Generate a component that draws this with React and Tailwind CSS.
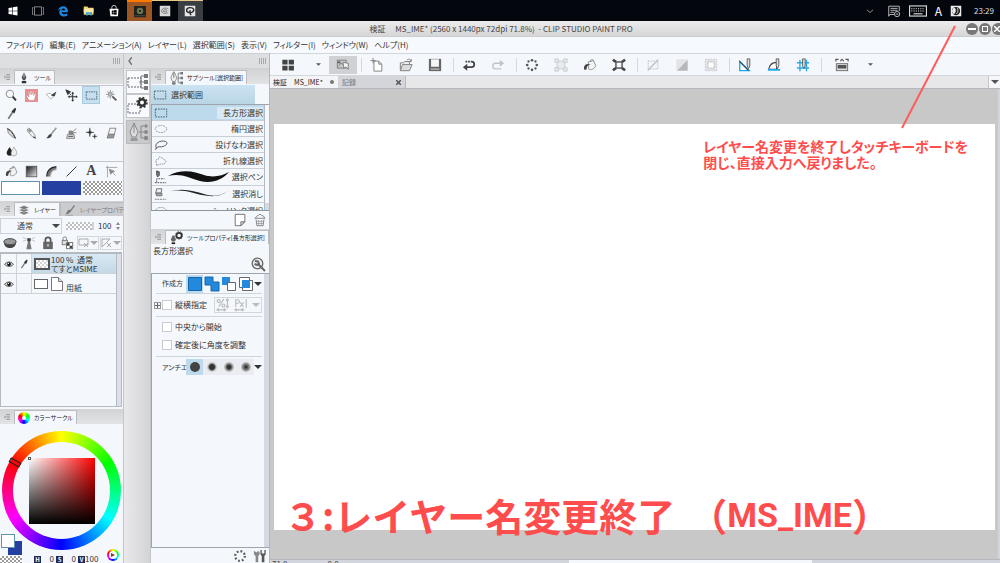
import React, { useState } from "react";
import clsx from "clsx";

const dash = { strokeDasharray: "2 1", fill: "none" };

// All glyphs share a 16x16 box.
const ICONS = {
  windows: (
    <path fill="#fff" d="M2 4l5-.8v4.4H2zM7.8 3L14 2v5.6H7.8zM2 8.4h5v4.4L2 12zM7.8 8.4H14V14l-6.2-1z" />
  ),
  taskview: (
    <g stroke="#aaa" fill="none">
      <rect x="3.500" y="2.500" width="9" height="11" />
      <path d="M2 3.500H.5v9H2M14 3.500h1.500v9H14" />
    </g>
  ),
  edge: (
    <path
      fill="#1b86e0"
      d="M1.500 7.500C2 3.500 5 1.500 8.300 1.500c4 0 6.200 2.800 6.200 6.500v1.500H6c.2 2 2 2.800 4 2.800 1.500 0 2.600-.4 3.700-1v3c-1.200.7-2.700 1-4.400 1C5.200 15.300 3 13 3 10c0-2 1-3.800 2.800-4.800C4 5.500 2.500 6.300 1.500 7.500zM6.200 7h4.600c0-1.500-.8-2.400-2.200-2.400S6.400 5.500 6.200 7z"
    />
  ),
  folder: (
    <g>
      <path fill="#f5d36b" d="M1 2h5l1 1.500h7V13H1z" />
      <path fill="#fbe9a8" d="M1 5h13v5H1z" />
      <path fill="#2fa8e0" d="M4 14V9.500h8V14h-2.500v-2.500h-3V14z" />
    </g>
  ),
  store: (
    <g>
      <path d="M5 5V3.500a3 3 0 0 1 6 0V5" stroke="#fff" fill="none" />
      <path fill="#fff" d="M2 5h12l-.7 10H3.200z" />
      <path fill="#000" d="M5 7.500l2.600-.4v2.500H5zM8 7l3.500-.5v3.100H8zM5 10h2.600v2.500L5 12.200zM8 10h3.500v3L8 12.600z" />
    </g>
  ),
  recorder: (
    <g>
      <rect width="16" height="15" fill="#20221f" />
      <circle cx="8" cy="6.500" r="4.300" fill="#62705a" />
      <circle cx="8" cy="6.500" r="2.300" fill="#1d211b" stroke="#9a9a50" />
      <path d="M1 13h14" stroke="#555" />
    </g>
  ),
  clip: (
    <g>
      <rect x="1" y="1" width="14" height="14" fill="#d9d9d9" />
      <path d="M12.500 5.500C10 3 3.500 4 3.500 8s7 4 9 1.500M11 7c-2-1.500-5-.5-5 1s3 1.500 4.500.5" stroke="#777" fill="none" strokeWidth="1.300" />
    </g>
  ),
  clipDark: (
    <g>
      <rect x="1" y="1" width="14" height="14" fill="#e6e6e6" />
      <path d="M6.500 10C2 9 2.500 3.500 8 3.500s6.500 4 3 6c-2 1-4.500-.5-2.500-2.500M7 9.500l2.500 4" stroke="#222" fill="none" strokeWidth="1.800" />
    </g>
  ),
  chevron: <path d="M3 6l5 4.500L13 6" stroke="#bbb" fill="none" strokeWidth="1.200" />,
  notify: (
    <g stroke="#ccc" fill="none">
      <path d="M8 12H3l-1 2V2.500h12V8M4 5h8M4 7.200h8M4 9.500h4" />
      <circle cx="11.500" cy="11.500" r="3" />
      <path d="M10 11.500h3" />
    </g>
  ),
  keyboard: (
    <g stroke="#ddd" fill="none">
      <rect x=".5" y="3.500" width="15" height="9" />
      <path d="M2 6h12M2 8h12" strokeDasharray="1 1" />
      <path d="M4 10.500h8" />
    </g>
  ),
  ime: (
    <g>
      <rect x="1" y="1" width="14" height="14" fill="#eee" />
      <circle cx="8" cy="8" r="5.500" fill="#222" />
      <path d="M5.500 3.500C8.500 4 8.500 10 5 12 1.500 9 2.500 5 5.500 3.500z" fill="#eee" />
      <path d="M10 4c1 3 1 5-1.500 8" stroke="#eee" fill="none" />
    </g>
  ),
  pen: (
    <g>
      <path d="M7.500 1L5 7l1.500 4h3L11 7 8.500 1z" fill="#555" />
      <path d="M8 2v5" stroke="#eee" />
      <path d="M5 12h6v3H5z" fill="#333" />
    </g>
  ),
  zoom: (
    <g>
      <circle cx="6" cy="6" r="4.500" fill="#f8f8f8" stroke="#999" strokeWidth="1.300" />
      <path d="M9.500 9.500l4 4.500" stroke="#333" strokeWidth="2.400" />
    </g>
  ),
  hand: (
    <g>
      <rect x="0" y="0" width="16" height="16" fill="#e98f8f" />
      <path
        d="M5 14L2 9.200c-.8-1.400.7-1.800 1.500-.8L5 9.800 4 4c0-1.200 1.400-1.200 1.600 0l.8 3V2.600c0-1.200 1.600-1.200 1.700 0L8.400 7l1-3.800c.3-1.100 1.700-.8 1.500.4L10.500 8l1.600-2.400c.8-.9 1.800-.2 1.300.8L11.500 14z"
        fill="#fff"
        stroke="#a66"
        strokeWidth=".5"
      />
    </g>
  ),
  operate: (
    <g>
      <path d="M1.500 6.500L6 5l5 4-4 3.500z" fill="#fbfbfb" stroke="#aaa" />
      <path d="M8 7l6-4-2 6-4-.5z" fill="#444" />
    </g>
  ),
  move: (
    <g stroke="#333" fill="#333">
      <path d="M1 1l6 2.500L4.500 4.500 3.500 7z" />
      <path d="M4 4l4 4" />
      <path d="M9.500 5v9M5 9.500h9" fill="none" strokeWidth="1.300" />
      <path d="M9.500 3.500l1.500 2H8zM9.500 15.500l1.500-2H8zM3.500 9.500l2-1.500v3zM15.500 9.500l-2-1.500v3z" strokeWidth=".3" />
    </g>
  ),
  marquee: <rect x="1.500" y="3.500" width="13" height="9" stroke="#456" {...dash} />,
  wand: (
    <g stroke="#888">
      <path d="M6.500 1v3M6.500 9v3M1 6.500h3M9 6.500h3M2.500 2.500l2 2M10.500 2.500l-2 2M2.500 10.500l2-2" />
      <circle cx="6.500" cy="6.500" r="2.500" fill="#bbb" />
      <path d="M9 9l5 5" stroke="#555" strokeWidth="2" />
    </g>
  ),
  eyedropper: (
    <g>
      <path d="M4 14.500l6-9" stroke="#777" strokeWidth="2" />
      <path d="M8 5.500l3.500 2.500L13.500 3c.5-2-1.500-2.500-2.500-1z" fill="#333" />
    </g>
  ),
  nib: (
    <g>
      <path d="M3 1.500l5 3.500 3.500 5 1.500 4-4-2-5-4.500z" fill="#ddd" stroke="#777" />
      <path d="M3 2l5 4 5 8" stroke="#222" fill="none" />
    </g>
  ),
  pencil: (
    <g>
      <path d="M3 2.500c1-1.500 3-1 3.500 0L12 9.500l1 4.500-4-2-6-7z" fill="#eee" stroke="#888" />
      <path d="M3 3l4-1 2 3-3.500 2z" fill="#999" />
      <path d="M11 11.500l2.500 3-3.500-2z" fill="#222" />
    </g>
  ),
  brush: (
    <g>
      <path d="M14 1L7 9.500" stroke="#999" strokeWidth="2" />
      <path d="M8.500 9.500C8 13 5 14.500 1.500 13.500 3.500 12.500 4 9 6.500 8.500z" fill="#444" />
    </g>
  ),
  airbrush: (
    <g stroke="#777" fill="#ddd">
      <path d="M3 9h8l1 5H2z" />
      <path d="M5 8.500V5h4l1 3.500z" fill="#888" />
      <path d="M9 6l5-4M10 7h4" fill="none" />
      <path d="M4 11.500h6" stroke="#333" />
    </g>
  ),
  sparkle: (
    <g fill="#222">
      <path d="M6 1l.8 4.700L11 6.500l-4.200.8L6 12l-.8-4.700L1 6.500l4.200-.8zM12 8.500l.5 2.500 2.500.5-2.500.5-.5 2.500-.5-2.500L9 11.500l2.500-.5z" stroke="#222" strokeWidth=".4" />
    </g>
  ),
  eraser: (
    <g stroke="#777">
      <path d="M6 1.500h7.500L11.500 9H4z" fill="#f4f4f4" />
      <path d="M4 9h7.500l-1 4.500H2.500z" fill="#999" />
    </g>
  ),
  blend: (
    <g>
      <path d="M5.500 2.500c2 3 4 5.500 4 7.500A3.800 3.800 0 0 1 2 10c0-2 2-4.500 3.500-7.500z" fill="#222" />
      <path d="M11 2.500c2 3 3.500 5.500 3.500 7.500a3.500 3.500 0 0 1-7 0c0-2 2-4.500 3.500-7.500z" fill="#eee" stroke="#888" strokeWidth=".7" />
    </g>
  ),
  bucket: (
    <g>
      <path d="M6 4.500l6-1.500 2.500 5.500c-1 4-6 6-8 4z" fill="#f3f3f3" stroke="#888" />
      <path d="M12 3c-1-2-3-1.500-4 1" stroke="#777" fill="none" />
      <path d="M1 12C1 7 5 6 9 7.500 5 8 4.500 10 4 13c-1 1-3 .5-3-1z" fill="#444" />
    </g>
  ),
  gradient: (
    <g>
      <linearGradient id="toolGradient" x1="0" y1="0" x2="1" y2="1">
        <stop offset="0" stopColor="#111" />
        <stop offset="1" stopColor="#eee" />
      </linearGradient>
      <rect x="1.500" y="1.500" width="13" height="13" fill="url(#toolGradient)" stroke="#555" />
    </g>
  ),
  contour: (
    <g>
      <path d="M2 14C2 7 6 3 14 2v4c-4 0-7 3-7 8z" fill="#777" />
      <path d="M2 14C2 7 6 3 14 2" stroke="#222" fill="none" strokeWidth="1.300" />
      <path d="M7 14c0-5 3-8 7-8" stroke="#ccc" fill="none" strokeWidth="1.500" />
    </g>
  ),
  line: <path d="M2 14L14 2" stroke="#333" strokeWidth="1.200" />,
  ruler: (
    <g stroke="#999" fill="none">
      <path d="M1 3h14M3 1v14" />
      <path d="M5 5l8 8M5 5l2 6.500 2-2.500 3-1z" fill="#777" />
    </g>
  ),
  layers: (
    <g fill="#777" stroke="#f4f4f4" strokeWidth=".7">
      <path d="M8 9l7 2.500-7 3-7-3z" />
      <path d="M8 5.500L15 8l-7 3-7-3z" />
      <path d="M8 2l7 2.500-7 3-7-3z" />
    </g>
  ),
  layerProp: (
    <g>
      <path d="M14 2l-6 8" stroke="#888" strokeWidth="2" />
      <path d="M9 8c0 4-4 6-7 5.500C4 12 4 8.500 6.500 7.500z" fill="#777" />
      <path d="M2 15h10" stroke="#999" />
    </g>
  ),
  mask: (
    <g>
      <ellipse cx="8" cy="6.500" rx="7" ry="3.500" fill="#999" stroke="#333" />
      <path d="M1 7c0 9 14 9 14 0-2 4-12 4-14 0z" fill="#444" />
    </g>
  ),
  beacon: (
    <g>
      <path d="M7 5h2l2 10H5z" fill="#777" />
      <path d="M6 2.500h4V6H6z" fill="#444" />
      <path d="M1 1.500l4 2M15 1.500l-4 2M1 6l4-1.500M15 6l-4-1.500" stroke="#bbb" />
    </g>
  ),
  lock: (
    <g>
      <path d="M5 7V4.500a3 3 0 0 1 6 0V7" stroke="#555" fill="none" strokeWidth="2" />
      <rect x="2.500" y="6.500" width="11" height="8.500" fill="#666" />
      <path d="M8 9v3" stroke="#ddd" strokeWidth="1.500" />
    </g>
  ),
  lockAlpha: (
    <g>
      <path d="M3.500 5V3a2 2 0 0 1 4 0v2" stroke="#777" fill="none" />
      <rect x="2.500" y="5" width="6" height="5" fill="#ddd" stroke="#777" />
      <rect x="7.500" y="7.500" width="7" height="7" fill="#fff" stroke="#666" />
      <path d="M8 8h3v3H8zM11 11h3v3h-3z" fill="#444" />
    </g>
  ),
  eye: (
    <g>
      <path d="M1 8.500c3-5 11-5 14 0-3 4.500-11 4.500-14 0z" fill="#ccc" stroke="#333" strokeWidth="1.200" />
      <circle cx="8" cy="8" r="3" fill="#111" />
      <circle cx="7" cy="7" r="1" fill="#fff" />
    </g>
  ),
  trash: (
    <g stroke="#777" fill="none">
      <path d="M2 6h12M3 6c0-2 2-3 3-3 1-2 3-2 4 0 2 0 3 1 3 3M3.500 7.500l1 7h7l1-7" />
      <path d="M6.500 8v6M9.500 8v6M4 9.500h8M4.500 12h7" strokeWidth=".6" />
    </g>
  ),
  note: (
    <g stroke="#666">
      <path d="M2.500 1.500h11V10L9 14.500H2.500z" fill="#fff" />
      <path d="M9 14.500V10h4.500z" fill="#ddd" />
    </g>
  ),
  page: (
    <g stroke="#777" fill="#fff">
      <path d="M2.500 1.500h7l4 4v9h-11z" />
      <path d="M9.500 1.500v4h4" fill="#ddd" />
    </g>
  ),
  wrench: (
    <g>
      <circle cx="6.500" cy="6.500" r="5.300" fill="#eee" stroke="#666" strokeWidth="1.300" />
      <path d="M4 4l3 .5 1 2.500-2 1-2.500-1M7 7l7 7" stroke="#666" strokeWidth="2" fill="none" />
    </g>
  ),
  tools: (
    <g fill="#888">
      <path d="M1 2l3 2 2-2 2 3-2 3v7H3V8L1 6z" />
      <path d="M8.500 1H10v4h3V1h1.500v5L13 8v7h-3V8L8.500 6z" fill="#555" />
    </g>
  ),
  spinner: <circle cx="8" cy="8" r="5.500" stroke="#555" strokeWidth="2.500" strokeDasharray="2 2.300" fill="none" />,
  grid: <path d="M1.500 2h6v5.500h-6zM8.800 2h6v5.500h-6zM1.500 8.800h6v5.500h-6zM8.800 8.800h6v5.500h-6z" fill="#444" />,
  quick: (
    <g stroke="#777">
      <rect x="1.500" y="2.500" width="10" height="9" fill="#ccc" />
      <path d="M3 9.500l3-4 2 2.500" fill="none" />
      <path d="M8 5l6 1v7l-3-3-2 2z" fill="#f5f5f5" />
      <path d="M2 4h3v2H2z" fill="#555" stroke="none" />
    </g>
  ),
  newFile: (
    <g stroke="#777" fill="#fff">
      <path d="M4.500 3.500H10l3.500 3.500v8h-9z" />
      <path d="M10 3.500V7h3.500" fill="#ddd" />
      <path d="M3.500 0v6M.5 3h6" stroke="#777" />
    </g>
  ),
  open: (
    <g stroke="#777">
      <path d="M1.500 14V5.500h4l1-1.500H12v3" fill="#eee" />
      <path d="M1.500 14.500L4 7.500h11l-3 7z" fill="#ddd" />
      <path d="M9 2.500c2-2 3.500-1 5 1M14 1v3h-3" fill="none" />
    </g>
  ),
  save: (
    <g>
      <path d="M1 1h14v14H1z" fill="#666" />
      <path d="M3.500 1.500h9V10h-9z" fill="#f6f6f6" />
      <path d="M3 12h10v1.500H3z" fill="#bbb" />
    </g>
  ),
  undo: (
    <g>
      <path d="M4 4h7c4 0 4 6.500 0 6.500H5" stroke="#444" strokeWidth="2" fill="none" strokeDasharray="2 1 2 1 30" />
      <path d="M6 6.500v8l-5-4z" fill="#444" />
    </g>
  ),
  redo: (
    <g>
      <path d="M12 12.500H5c-4 0-4-6.500 0-6.500h6" stroke="#c2c4c7" strokeWidth="1.500" fill="none" />
      <path d="M10 2v8l5-4z" fill="#c2c4c7" />
    </g>
  ),
  clear: (
    <g fill="#555">
      <circle cx="8" cy="2.500" r="1.500" />
      <circle cx="8" cy="13.500" r="1.500" />
      <circle cx="2.500" cy="8" r="1.500" />
      <circle cx="13.500" cy="8" r="1.500" />
      <circle cx="4" cy="4" r="1.300" />
      <circle cx="12" cy="4" r="1.300" />
      <circle cx="4" cy="12" r="1.300" />
      <circle cx="12" cy="12" r="1.300" />
    </g>
  ),
  crop: (
    <g stroke="#c6c8cb" fill="#e8eaed">
      <rect x="3.500" y="3.500" width="9" height="9" />
      <path d="M1 1h4v4H1zM11 1h4v4h-4zM1 11h4v4H1zM11 11h4v4h-4z" />
    </g>
  ),
  transform: (
    <g stroke="#444" fill="none">
      <rect x="4.500" y="4.500" width="7" height="7" strokeWidth="1.500" />
      <path d="M1 2l3.500 2.500M15 2l-3.500 2.500M1 14l3.500-2.500M15 14l-3.500-2.500" strokeWidth="3" />
    </g>
  ),
  deselect: (
    <g stroke="#b9bbbe">
      <rect x="2.500" y="3.500" width="11" height="9" {...dash} />
      <path d="M2 14L14 2" strokeWidth="1.500" />
    </g>
  ),
  invert: (
    <g>
      <path d="M1.500 14.500v-13h13z" fill="#e2e3e6" />
      <path d="M14.500 2v12.500H2z" fill="#b5b7ba" />
    </g>
  ),
  border: (
    <g>
      <rect x="1.500" y="1.500" width="13" height="13" fill="#e3e4e7" stroke="#c6c8cb" strokeDasharray="2 1" />
      <rect x="4.500" y="4.500" width="7" height="7" stroke="#999" strokeDasharray="1 1" fill="#fff" />
    </g>
  ),
  snapRuler: (
    <g>
      <path d="M2 4v10.500h11z" stroke="#1aa7e8" fill="#fff" strokeWidth="1.500" />
      <path d="M1.500 3.500l10.500 11" stroke="#445" strokeWidth="1.300" />
      <path d="M10.500 1h3v8L12 12l-1.500-3z" fill="#ddd" stroke="#555" />
    </g>
  ),
  snapSpecial: (
    <g>
      <path d="M2 13c1-6 5-8 9-8v8z" stroke="#445" fill="#fff" strokeWidth="1.300" />
      <path d="M1 13.500h14" stroke="#1aa7e8" strokeWidth="2" />
      <path d="M10.500 1h3v8L12 12l-1.500-3z" fill="#ddd" stroke="#555" />
    </g>
  ),
  snapGrid: (
    <g>
      <path d="M4.500 2v13M12 2v13M1 5.500h14M1 11.500h14" stroke="#29aae6" strokeWidth="1.600" />
      <path d="M7.500 1h3v8L9 12 7.500 9z" fill="#ddd" stroke="#555" />
    </g>
  ),
  panel: (
    <g>
      <path d="M1 4V1.500h3M12 1.500h3V4M6 3.500l2-2 2 2" stroke="#555" fill="none" strokeWidth="1.300" />
      <rect x="1.500" y="6.500" width="13" height="8" fill="#ddd" stroke="#666" />
      <path d="M3 8h10v4H3z" fill="#555" />
    </g>
  ),
  ellipse: <ellipse cx="8" cy="8" rx="6.500" ry="4" stroke="#889" {...dash} />,
  lasso: <path d="M3 12C-1 6 8 2 13 4s-1 7-8 6c-2 0-2 3-4 3" stroke="#445" fill="none" />,
  polyLasso: <path d="M3 13l-1-6 3-1 1-3 4 2 4 3-3 4-2-1z" stroke="#889" {...dash} />,
  penSelect: (
    <g stroke="#444">
      <path d="M3 1l3 1v4L4 8 3 5z" fill="#777" />
      <path d="M3 14v-4h9" {...dash} />
      <path d="M1 14.500h13" {...dash} />
    </g>
  ),
  eraseSelect: (
    <g stroke="#666">
      <path d="M3 2h6l-1 5H2z" fill="#eee" />
      <path d="M2 7h7v3H3z" fill="#aaa" />
      <path d="M1 14h13" {...dash} />
    </g>
  ),
  subtool: (
    <g>
      <path d="M5 1L2 8l2 4h3l2-4-3-7z" fill="#eee" stroke="#888" />
      <path d="M5.500 2v6M4 13h3v2H4z" stroke="#777" fill="#777" />
      <path d="M13 1h3v3h-3zM13 6.500h3v3h-3zM13 12h3v3h-3z" fill="#777" />
      <path d="M13 2.500h-2.500v11H13M10 8h3" stroke="#777" fill="none" />
    </g>
  ),
  toolProp: (
    <g>
      <path d="M4 5L2 10l1.500 2h3L8 10 6 5z" fill="#666" />
      <path d="M3 13h4v2H3z" fill="#222" />
      <circle cx="11.500" cy="5" r="3" stroke="#333" strokeWidth="2" fill="none" />
      <circle cx="11.500" cy="5" r="4.300" stroke="#333" strokeWidth="1" strokeDasharray="1.500 1.500" fill="none" />
    </g>
  ),
  percent: (
    <g stroke="#bbb" fill="none" strokeWidth="1.300">
      <path d="M9 1L3 10M13 1v10M11.500 3L13 1l1.500 2M11.500 9l1.500 2 1.500-2M1 13.500h10M3 12l-2 1.500L3 15M9 12l2 1.500L9 15" />
      <circle cx="3" cy="3.500" r="1.700" />
      <circle cx="8.500" cy="8.500" r="1.700" />
    </g>
  ),
  px: (
    <g stroke="#bbb" fill="none" strokeWidth="1.300">
      <path d="M2 10V2h2c3 0 3 4 0 4H2M7 5l4 5M11 5l-4 5M14 1v10M1 13.500h10M3 12l-2 1.500L3 15M9 12l2 1.500L9 15" />
    </g>
  ),
};

function Icon({ name, className = "size-3.5" }) {
  return (
    <svg viewBox="0 0 16 16" className={clsx("shrink-0", className)} aria-hidden="true">
      {ICONS[name]}
    </svg>
  );
}

function Caret({ className = "w-2 h-1" }) {
  return (
    <svg viewBox="0 0 8 4" className={clsx("shrink-0", className)} aria-hidden="true">
      <path d="M0 0h8L4 4z" fill="currentColor" />
    </svg>
  );
}

const CHECKER =
  "bg-[repeating-conic-gradient(#999_0_25%,#fff_0_50%)] bg-size-[4px_4px]";

const TASKS = ["windows", "taskview", "edge", "folder", "store", "recorder", "clip", "clipDark"];

function Taskbar() {
  return (
    <header className="h-[21px] shrink-0 bg-[#03060c] flex items-center justify-between">
      <nav className="w-[203px] h-full grid grid-cols-8">
        {TASKS.map((name) => (
          <button
            key={name}
            aria-label={name}
            className={clsx(
              "flex items-center justify-center",
              name === "recorder" && "bg-[#9c5624] border-t-2 border-[#ff7a00]",
              name === "clip" && "border-t border-[#e8c98a]",
              name === "clipDark" && "bg-[#3a3d42] border-t border-[#e8c98a]"
            )}
          >
            <Icon name={name} className="size-3" />
          </button>
        ))}
      </nav>
      <div className="flex items-center pr-1.5 gap-2 text-[#ddd]">
        <Icon name="chevron" className="size-2.5 mr-1" />
        <Icon name="notify" className="size-3.5" />
        <Icon name="keyboard" className="size-[18px]" />
        <span className="text-xs leading-4 text-white">A</span>
        <Icon name="ime" className="size-3" />
        <time className="text-[8px] pl-1">23:29</time>
      </div>
    </header>
  );
}

function TitleBar() {
  return (
    <div className="h-4 shrink-0 bg-linear-to-b from-[#ececec] to-[#d6d6d8] flex items-center border-b border-[#ccc]">
      <h1 className="flex-1 text-center pl-9 text-[8px] whitespace-pre text-[#444]">
        検証　 MS_IME* (2560 x 1440px 72dpi 71.8%)  - CLIP STUDIO PAINT PRO
      </h1>
      <div className="flex gap-px">
        <button aria-label="最小化" className="size-3 rounded-full bg-[#777] flex items-center justify-center">
          <span className="w-2 h-0.5 bg-white" />
        </button>
        <button aria-label="最大化" className="size-3 rounded-full bg-[#777] flex items-center justify-center">
          <span className="size-1.5 border border-white" />
        </button>
        <button aria-label="閉じる" className="w-2 h-3 rounded-l-full bg-[#777] flex items-center justify-end">
          <svg viewBox="0 0 6 6" className="size-1.5">
            <path d="M0 0l6 6M6 0L0 6" stroke="#fff" strokeWidth="1.500" />
          </svg>
        </button>
      </div>
    </div>
  );
}

const MENUS = [
  "ファイル(F)",
  "編集(E)",
  "アニメーション(A)",
  "レイヤー(L)",
  "選択範囲(S)",
  "表示(V)",
  "フィルター(I)",
  "ウィンドウ(W)",
  "ヘルプ(H)",
];

function MenuBar() {
  return (
    <nav className="h-4 shrink-0 bg-[#f6f9fe] flex items-center gap-1.5 pl-1.5 text-[8px]">
      {MENUS.map((m) => (
        <button key={m} className="whitespace-nowrap">
          {m}
        </button>
      ))}
    </nav>
  );
}

function Grip({ collapse }) {
  return (
    <div className="h-4 shrink-0 bg-[#dedfe1] border-y border-[#cfd0d2] flex items-center justify-between pr-0.5 pl-1">
      {collapse ? (
        <button aria-label="パレットをたたむ">
          <svg viewBox="0 0 4 8" className="w-1 h-2">
            <path d="M4 0L1 4l3 4" stroke="#777" fill="none" strokeWidth="1.500" />
          </svg>
        </button>
      ) : (
        <span />
      )}
      <span className="w-2 h-1.5 bg-[repeating-linear-gradient(90deg,#aaa_0_1px,transparent_1px_2px)]" />
    </div>
  );
}

function PanelTabs({ children }) {
  return (
    <div className="h-4 shrink-0 bg-linear-to-b from-[#d2d3d5] to-[#e2e3e5] flex items-end border-b border-[#f4f8fd]">
      <button aria-label="パレットメニュー" className="w-3.5 h-full shrink-0 flex items-center justify-center">
        <svg viewBox="0 0 8 8" className="size-1.5">
          <path d="M0 2l2 2-2 2M3 1h5M3 4h5M3 7h5" stroke="#777" fill="none" />
        </svg>
      </button>
      {children}
    </div>
  );
}

function Tab({ icon, active = true, children }) {
  return (
    <button
      className={clsx(
        "h-3.5 flex items-center gap-1 px-[3px] text-[6px] whitespace-nowrap border border-b-0 border-[#bcbdc0]",
        active ? "bg-[#f4f8fd] text-[#222]" : "bg-[#cbcccf] text-[#777]"
      )}
    >
      {icon}
      {children}
    </button>
  );
}

const TOOL_GROUPS = [
  ["zoom", "hand", "operate", "move", "marquee", "wand", "eyedropper"],
  ["nib", "pencil", "brush", "airbrush", "sparkle", "eraser", "blend"],
  ["bucket", "gradient", "contour", "line", "text", "ruler"],
];

function ToolPalette() {
  const [tool, setTool] = useState("marquee");
  return (
    <section>
      <PanelTabs>
        <Tab icon={<Icon name="pen" className="size-3" />}>ツール</Tab>
      </PanelTabs>
      {TOOL_GROUPS.map((group) => (
        <div key={group[0]} className="grid grid-cols-6 px-0.5 border-t border-[#c3c6ca] pb-px">
          {group.map((name) => (
            <button
              key={name}
              aria-label={name}
              onClick={() => setTool(name)}
              className={clsx(
                "h-[18px] mx-px flex items-center justify-center",
                tool === name && "bg-[#c5e0f1] border border-[#a9cbe0]"
              )}
            >
              {name === "text" ? (
                <span className="font-['Liberation_Serif',serif] font-bold text-sm leading-4 text-[#444]">A</span>
              ) : (
                <Icon name={name} className="size-[13px]" />
              )}
            </button>
          ))}
        </div>
      ))}
      <div className="h-3.5 grid grid-cols-3 gap-0.5 px-px">
        <button aria-label="メインカラー" className="bg-white border border-[#5d93ad]" />
        <button aria-label="サブカラー" className="bg-[#2440a0]" />
        <button aria-label="透明色" className={CHECKER} />
      </div>
    </section>
  );
}

function LayerRow({ active, children }) {
  return (
    <li
      className={clsx(
        "h-5 grid grid-cols-[16px_15px_1fr] border-b border-[#cfd3d8]",
        active && "bg-linear-to-b from-[#d8e9f4] to-[#c3d9e6]"
      )}
    >
      <button aria-label="表示切替" className="flex items-center justify-center bg-[#f4f8fd] border-r border-[#cfd3d8]">
        <Icon name="eye" className="size-2.5" />
      </button>
      <span className="flex items-center justify-center bg-[#f4f8fd] border-r border-[#cfd3d8]">
        {active && <Icon name="eyedropper" className="size-2.5" />}
      </span>
      <div className="flex items-center gap-px pl-0.5 text-[8px] text-[#333]">{children}</div>
    </li>
  );
}

function LayerPalette() {
  const [opacity, setOpacity] = useState(100);
  return (
    <section className="flex-1 min-h-0 flex flex-col mt-1.5">
      <PanelTabs>
        <Tab icon={<Icon name="layers" className="size-3" />}>レイヤー</Tab>
        <Tab active={false} icon={<Icon name="layerProp" className="size-3" />}>
          レイヤープロパティ
        </Tab>
      </PanelTabs>
      <div className="h-[17px] flex items-center gap-1 text-[8px]">
        <label className="relative w-[62px] flex items-center text-[#444]">
          <select aria-label="合成モード" className="appearance-none w-full h-4 pl-4 bg-[#f4f8fd] border border-[#ccd2d8]">
            <option>通常</option>
            <option>乗算</option>
          </select>
          <Caret className="w-2 h-1 absolute right-0.5 pointer-events-none" />
        </label>
        <input
          type="range"
          aria-label="不透明度"
          min="0"
          max="100"
          value={opacity}
          onChange={(e) => setOpacity(Number(e.target.value))}
          className={clsx("appearance-none w-7 h-2 border-r-2 border-[#bbb] opacity-60 [&::-webkit-slider-thumb]:appearance-none", CHECKER)}
        />
        <input
          aria-label="不透明度の値"
          className="w-4"
          value={opacity}
          onChange={(e) => setOpacity(Number(e.target.value) || 0)}
        />
        <svg viewBox="0 0 4 8" className="w-1 h-2 -ml-0.5" aria-hidden="true">
          <path d="M0 3l2-3 2 3zM0 5l2 3 2-3z" fill="#888" />
        </svg>
      </div>
      <div className="h-[18px] flex items-center">
        {["mask", "beacon", "lock", "lockAlpha"].map((name) => (
          <button key={name} aria-label={name} className="w-[19px] flex justify-center">
            <Icon name={name} />
          </button>
        ))}
        <button aria-label="マスク範囲" className="w-[22px] h-3.5 mx-px border border-[#d3d6da] flex items-center justify-center text-[#aaa]">
          <svg viewBox="0 0 12 12" className="size-3">
            <path d="M1 2h9v6H1zM6 6l4 4M10 6l-4 4" stroke="#aaa" fill="none" />
          </svg>
          <Caret />
        </button>
        <button aria-label="定規範囲" className="w-[22px] h-3.5 border border-[#d3d6da] flex items-center justify-center text-[#aaa]">
          <svg viewBox="0 0 12 12" className="size-3">
            <path d="M1 10V2h8zM6 6l4 4M10 6l-4 4" stroke="#aaa" fill="none" />
          </svg>
          <Caret />
        </button>
      </div>
      <div className="flex-1 min-h-0 border border-t-2 border-[#b5bac1] mr-px flex">
        <ul className="flex-1">
          <LayerRow active>
            <span className="w-4 h-3 border-2 border-[#555] bg-white flex">
              <span className={clsx("flex-1 opacity-40", CHECKER)} />
            </span>
            <div className="leading-[9px] whitespace-pre">
              <p>100 %  通常</p>
              <p>てすとMSIME</p>
            </div>
          </LayerRow>
          <LayerRow>
            <span className="w-3.5 h-2.5 border border-[#666] bg-white" />
            <Icon name="page" className="size-4" />
            <span className="self-end leading-[10px]">用紙</span>
          </LayerRow>
        </ul>
        <div className="w-[5px] border-l border-[#b5bac1] bg-[#dde1e7]" />
      </div>
    </section>
  );
}

function Readout({ label, value }) {
  return (
    <span className="flex items-center">
      <span className="size-[7px] bg-[#22285a] text-white text-[6px] leading-[7px] text-center font-bold">{label}</span>
      <span className="min-w-[13px] text-right">{value}</span>
    </span>
  );
}

function ColorPalette() {
  return (
    <section className="shrink-0 mt-0.5">
      <PanelTabs>
        <Tab
          icon={
            <span className="size-3 rounded-full bg-[conic-gradient(#ff0,#0f0,#0ff,#00f,#f0f,#f00,#ff0)] flex items-center justify-center">
              <span className="size-1 rounded-full bg-white" />
            </span>
          }
        >
          カラーサークル
        </Tab>
      </PanelTabs>
      <div className="relative h-[138px] pt-1.5">
        <div className="mx-auto size-[119px] rounded-full bg-[conic-gradient(#ff0,#0f0,#0ff,#00f,#f0f,#f00,#ff0)] flex items-center justify-center">
          <div className="size-[97px] rounded-full bg-[#f4f8fd] flex items-center justify-center">
            <div className="size-[66px] bg-[linear-gradient(to_top,#000,transparent),linear-gradient(to_right,#fff,#f00)]" />
          </div>
        </div>
        <span className="absolute left-7 top-8 size-[3px] border border-[#555] bg-white" />
        <span className="absolute left-[9px] top-[35px] w-3 h-[5px] border border-[#222] rotate-30" />
        <span className="absolute left-2 bottom-2 size-3.5 bg-[#2440a0]" />
        <span className="absolute left-px bottom-[15px] size-3.5 bg-white border border-[#5d93ad]" />
        <span className={clsx("absolute left-0 bottom-0 w-[22px] h-[7px]", CHECKER)} />
        <div className="absolute left-[34px] bottom-0 h-2 flex items-center gap-0.5 text-[8px] leading-2 text-[#333]">
          <Readout label="H" value="0" />
          <Readout label="S" value="0" />
          <Readout label="V" value="100" />
        </div>
        <button
          aria-label="カラーサークル切替"
          className="absolute right-1 bottom-0.5 size-3 rounded-full bg-[conic-gradient(#ff0,#0f0,#0ff,#00f,#f0f,#f00,#ff0)] flex items-center justify-center"
        >
          <span className="size-2 rounded-full bg-white flex items-center justify-center">
            <svg viewBox="0 0 4 4" className="size-1">
              <path d="M0 0l4 2-4 2z" fill="#833" />
            </svg>
          </span>
        </button>
      </div>
    </section>
  );
}

function Stroke({ thin }) {
  return (
    <svg viewBox="0 0 62 12" className="w-[62px] h-3 shrink-0" aria-hidden="true">
      {thin ? (
        <path d="M0 4C14-1 26 3 36 6s18 2 25-4c-8 7-17 7-27 5S14 0 0 4z" fill="#222" />
      ) : (
        <path d="M0 5C14-3 27 1 36 4s18 1 25-3C54 9 44 13 32 10S14 2 0 5z" fill="#111" />
      )}
    </svg>
  );
}

const SUBTOOLS = [
  { label: "長方形選択", icon: "marquee" },
  { label: "楕円選択", icon: "ellipse" },
  { label: "投げなわ選択", icon: "lasso" },
  { label: "折れ線選択", icon: "polyLasso" },
  { label: "選択ペン", icon: "penSelect", stroke: "thick" },
  { label: "選択消し", icon: "eraseSelect", stroke: "thin" },
  { label: "シュリンク選択", icon: "ellipse" },
];

function SubtoolPalette() {
  const [current, setCurrent] = useState("長方形選択");
  return (
    <section className="shrink-0">
      <PanelTabs>
        <Tab icon={<Icon name="subtool" className="size-3.5" />}>サブツール[選択範囲]</Tab>
      </PanelTabs>
      <div className="h-5 border-b border-[#9da4ab] pr-3.5">
        <button className="w-full h-[19px] pl-0.5 flex items-center gap-1 text-[8px] bg-linear-to-b from-[#cbe3f2] to-[#b9d5e5]">
          <Icon name="marquee" />
          選択範囲
        </button>
      </div>
      <div className="h-[106px] flex overflow-hidden border-b border-[#8f959c]">
        <ul className="flex-1 min-w-0 border-l border-[#9da4ab]">
          {SUBTOOLS.map((s) => (
            <li key={s.label}>
              <button
                onClick={() => setCurrent(s.label)}
                className={clsx(
                  "w-full pl-0.5 pr-px flex items-center text-[8px] border-b border-[#c8ced5]",
                  s.stroke ? "h-[17px]" : "h-4",
                  current === s.label && "bg-[#bcdaeb]"
                )}
              >
                <Icon name={s.icon} className="size-3.5" />
                {s.stroke && <Stroke thin={s.stroke === "thin"} />}
                <span
                  className={clsx(
                    "ml-auto whitespace-nowrap",
                    current === s.label && "bg-[#d8e9f4] pl-1.5"
                  )}
                >
                  {s.label}
                </span>
              </button>
            </li>
          ))}
        </ul>
        <div className="w-[5px] bg-[#d5dae2] border-l border-[#b5bac1]">
          <div className="h-[98px] bg-[#f4f8fd]" />
        </div>
      </div>
      <div className="h-[18px] flex items-center justify-end gap-1.5 pr-0.5">
        <button aria-label="サブツールの複製">
          <Icon name="note" />
        </button>
        <button aria-label="サブツールの削除">
          <Icon name="trash" />
        </button>
      </div>
    </section>
  );
}

function CheckRow({ className = "pl-1.5", children }) {
  return (
    <label className={clsx("h-[18px] flex items-center gap-[3px]", className)}>
      <input type="checkbox" className="appearance-none size-2.5 bg-white border border-[#c9cdd2]" />
      {children}
    </label>
  );
}

function CreateMode({ mode }) {
  return (
    <svg viewBox="0 0 16 16" className="size-4" aria-hidden="true">
      {mode === "new" && <path d="M1.500 1.500h13v13h-13z" fill="#2389dc" stroke="#1567ad" />}
      {mode === "add" && <path d="M1 1h8v5h6v9H7V9H1z" fill="#2389dc" stroke="#1567ad" />}
      {mode === "sub" && (
        <g>
          <path d="M1 1h8v8H1z" fill="#2389dc" />
          <path d="M6.500 6.500h8v8h-8z" fill="#fff" stroke="#666" />
        </g>
      )}
      {mode === "and" && (
        <g>
          <path d="M1.500 1.500h10v10h-10zM4.500 4.500h10v10h-10z" fill="#fff" stroke="#666" />
          <path d="M4 4h8v8H4z" fill="#2389dc" />
        </g>
      )}
    </svg>
  );
}

const AA_DOTS = [
  "bg-[#444]",
  "bg-[radial-gradient(#333_35%,#ccc_60%)]",
  "bg-[radial-gradient(#333_25%,#999_50%,#ccc_70%)]",
  "bg-[radial-gradient(#333_10%,#888_45%,#ccc_70%)]",
];

function ToolProperty() {
  const [mode, setMode] = useState("new");
  const [aa, setAa] = useState(0);
  return (
    <section className="flex-1 min-h-0 flex flex-col">
      <PanelTabs>
        <Tab icon={<Icon name="toolProp" className="size-3.5" />}>ツールプロパティ[長方形選択]</Tab>
      </PanelTabs>
      <div className="h-[29px] shrink-0 flex justify-between px-0.5 border-b border-[#9da4ab] text-[8px]">
        <h2>長方形選択</h2>
        <button aria-label="初期設定に戻す" className="self-end">
          <Icon name="wrench" className="size-4" />
        </button>
      </div>
      <div className="flex-1 min-h-0 flex border-l border-[#9da4ab]">
        <div className="flex-1 min-w-0 pl-1 pr-0.5 text-[8px] text-[#333]">
          <div className="h-5 flex items-center border-b border-[#cfd5dc]">
            <span className="w-[30px] pl-1.5 whitespace-nowrap text-[7px]">作成方</span>
            {["new", "add", "sub", "and"].map((m) => (
              <button
                key={m}
                aria-label={m}
                onClick={() => setMode(m)}
                className={clsx("flex-1 h-[18px] flex items-center justify-center", mode === m && "bg-[#bcdaeb]")}
              >
                <CreateMode mode={m} />
              </button>
            ))}
            <Caret />
          </div>
          <div className="h-[23px] flex items-center border-b border-[#cfd5dc]">
            <button aria-label="展開" className="size-[7px] -ml-0.5 flex items-center justify-center border border-[#999]">
              <svg viewBox="0 0 5 5" className="size-[5px]">
                <path d="M0 2.500h5M2.500 0v5" stroke="#666" />
              </svg>
            </button>
            <CheckRow className="pl-px">縦横指定</CheckRow>
            <div className="ml-auto h-4 flex items-center gap-1 border border-[#d3d6da] px-px text-[#bbb]">
              <Icon name="percent" />
              <Icon name="px" />
              <Caret />
            </div>
          </div>
          <div className="h-10 pt-px border-b border-[#cfd5dc]">
            <CheckRow>中央から開始</CheckRow>
            <CheckRow>確定後に角度を調整</CheckRow>
          </div>
          <div className="h-5 flex items-center">
            <span className="w-[30px] pl-1.5 whitespace-nowrap text-[7px]">アンチエ</span>
            {AA_DOTS.map((dot, i) => (
              <button
                key={dot}
                aria-label={`アンチエイリアス ${i}`}
                onClick={() => setAa(i)}
                className={clsx("flex-1 h-4 flex items-center justify-center", aa === i ? "bg-[#bcdaeb]" : "bg-[#e9edf2]")}
              >
                <span className={clsx("size-2.5 rounded-full", dot)} />
              </button>
            ))}
            <Caret />
          </div>
        </div>
        <div className="w-[5px] bg-[#d5dae2]" />
      </div>
      <footer className="h-4 shrink-0 border-t border-[#9da4ab] flex items-center justify-end gap-1.5 pr-0.5">
        <Icon name="spinner" />
        <Icon name="tools" />
      </footer>
    </section>
  );
}

function QuickStrip() {
  return (
    <aside className="w-[27px] shrink-0 bg-linear-to-r from-[#e9e9eb] to-[#d3d4d6] pl-0.5 pt-px border-r border-[#c3c6ca]">
      <button aria-label="サブツール" className="w-full h-6 border border-[#c3c6ca] bg-[#f8fafd] flex items-center justify-center">
        <svg viewBox="0 0 22 20" className="w-[22px] h-5">
          <path d="M1 6h13v9H1z" stroke="#667" {...dash} />
          <path d="M17 2h4v4h-4zM17 8h4v4h-4zM17 14h4v4h-4z" fill="#777" />
          <path d="M17 4h-3v12h3M12 10h5" stroke="#777" fill="none" />
        </svg>
      </button>
      <button aria-label="ツールプロパティ" className="w-full h-6 border border-[#c3c6ca] bg-[#f8fafd] flex items-center justify-center">
        <svg viewBox="0 0 22 20" className="w-[22px] h-5">
          <path d="M1 8h12v9H1z" stroke="#667" {...dash} />
          <circle cx="15" cy="6.500" r="3.200" stroke="#333" strokeWidth="2.500" fill="#fff" />
          <circle cx="15" cy="6.500" r="5" stroke="#333" strokeWidth="1.500" strokeDasharray="2 1.900" fill="none" />
        </svg>
      </button>
      <button aria-label="ブラシ" className="w-full h-6 mt-0.5 border border-[#b9bbbe] bg-[#c9cacd] flex items-center justify-center">
        <svg viewBox="0 0 22 20" className="w-[22px] h-5">
          <path d="M7 1L3 10l2 5h4l2-5z" fill="#ddd" stroke="#888" />
          <path d="M7 3v8" stroke="#888" />
          <path d="M3.500 16h7v3h-7z" fill="#999" />
          <path d="M17 4h-3v12h3M12 10h5" stroke="#888" fill="none" />
          <circle cx="19" cy="4" r="1.700" fill="#888" />
          <circle cx="19" cy="10" r="2" fill="#888" />
          <circle cx="19" cy="16" r="2.200" fill="#888" />
        </svg>
      </button>
    </aside>
  );
}

const COMMANDS = [
  ["newFile", "open", "save"],
  ["undo", "redo"],
  ["clear", "crop", "bucket", "transform"],
  ["deselect", "invert", "border"],
  ["snapRuler", "snapSpecial", "snapGrid"],
];

function CommandBar() {
  return (
    <div className="h-[23px] shrink-0 bg-[#f4f8fd] border-y border-[#d3d6da] flex items-center pl-[3px]">
      <button aria-label="ワークスペース" className="w-[29px] flex justify-center">
        <Icon name="grid" />
      </button>
      <button aria-label="ワークスペースメニュー" className="w-[27px] pl-3.5 text-[#555]">
        <Caret className="w-[5px] h-[3px]" />
      </button>
      <button aria-label="クイックアクセス" className="w-7 h-[18px] bg-[#cfd1d5] flex items-center justify-center">
        <Icon name="quick" />
      </button>
      {COMMANDS.map((group) => (
        <div key={group[0]} className="flex items-center">
          <span className="ml-1 w-px h-3.5 bg-[#d5d9de]" />
          {group.map((name) => (
            <button key={name} aria-label={name} className="w-[29px] flex justify-center">
              <Icon name={name} />
            </button>
          ))}
        </div>
      ))}
      <span className="ml-1 w-px h-3.5 bg-[#d5d9de]" />
      <button aria-label="panel" className="w-10 flex justify-center">
        <Icon name="panel" />
      </button>
      <button aria-label="コマンドバーメニュー" className="pl-1.5 text-[#555]">
        <Caret className="w-[5px] h-[3px]" />
      </button>
    </div>
  );
}

function DocumentTabs() {
  return (
    <div className="h-[13px] shrink-0 bg-[#e7e7ea] flex items-stretch border-b border-[#b4b7bd] text-[7px] text-[#222]">
      <button className="w-[68px] pl-[3px] pr-1 flex items-center justify-between bg-[#f2f4f8] whitespace-pre">
        検証　MS_IME*
        <span className="size-1 rounded-full bg-[#777]" />
      </button>
      <button className="w-[68px] px-1 flex items-center justify-between bg-[#d3d5da] border-r border-[#b9bbc0] text-[#777]">
        記録
        <svg viewBox="0 0 5 5" className="size-[5px]">
          <path d="M0 0l5 5M5 0L0 5" stroke="#555" strokeWidth="1.500" />
        </svg>
      </button>
      <button aria-label="タブ一覧" className="ml-auto w-3 flex items-center justify-center bg-[#f4f6fa] border-l border-[#c3c6ca] text-[#555]">
        <Caret />
      </button>
    </div>
  );
}

function Workspace() {
  return (
    <main className="flex-1 min-w-0 flex flex-col">
      <CommandBar />
      <DocumentTabs />
      <div className="relative flex-1 min-h-0 flex bg-[#c8c8c8]">
        <div className="flex-1 flex pt-[35px] pb-[29px] pl-1 pr-[3px]">
          <div className="flex-1 bg-white" />
        </div>
        <div className="w-0.5 bg-[#d3d5dd]" />
        <p className="absolute right-8 top-[49px] text-[14px] leading-4 font-bold text-[#ff4d4d] whitespace-nowrap">
          レイヤー名変更を終了しタッチキーボードを
          <br />
          閉じ、直接入力へ戻りました。
        </p>
        <p className="absolute left-3.5 bottom-5 flex items-center text-[38px] leading-12 font-bold text-[#ff4d4d] whitespace-nowrap [font-feature-settings:normal]">
          <span>３:レイヤー名変更終了</span>
          <span className="ml-3.5">（</span>
          <span className="font-[Roboto,sans-serif] text-[34px]">MS_IME</span>
          <span>）</span>
        </p>
      </div>
      <footer className="h-1 shrink-0 overflow-hidden bg-[#d3d5dd] border-t border-[#b4b7bd] flex gap-10 text-[8px] leading-2 text-[#444]">
        <span className="pl-0.5">71.8</span>
        <span>0.0</span>
        <span className="ml-auto mr-[188px] w-1/3 h-1 bg-[#f4f8fd]" />
      </footer>
    </main>
  );
}

export default function App() {
  return (
    <div className="relative h-screen flex flex-col overflow-hidden bg-[#f4f8fd] text-[#333] font-['Noto_Sans_CJK_JP',sans-serif] [font-feature-settings:'palt']">
      <Taskbar />
      <TitleBar />
      <MenuBar />
      <div className="flex-1 min-h-0 flex">
        <aside className="w-31 shrink-0 flex flex-col border-r border-[#c3c6ca]">
          <Grip />
          <ToolPalette />
          <LayerPalette />
          <ColorPalette />
        </aside>
        <div className="w-[145px] shrink-0 flex flex-col">
          <Grip collapse />
          <div className="flex-1 min-h-0 flex">
            <QuickStrip />
            <div className="flex-1 min-w-0 flex flex-col">
              <SubtoolPalette />
              <ToolProperty />
            </div>
          </div>
        </div>
        <div className="w-px bg-[#b4b7bd]" />
        <Workspace />
      </div>
      {/* pointer from the note up to the IME indicator */}
      <svg className="absolute right-10 top-6 w-[60px] h-[106px] pointer-events-none" viewBox="0 0 60 106" aria-hidden="true">
        <path d="M55 2L2 104" stroke="#ff5c5c" strokeWidth="2" />
      </svg>
    </div>
  );
}
